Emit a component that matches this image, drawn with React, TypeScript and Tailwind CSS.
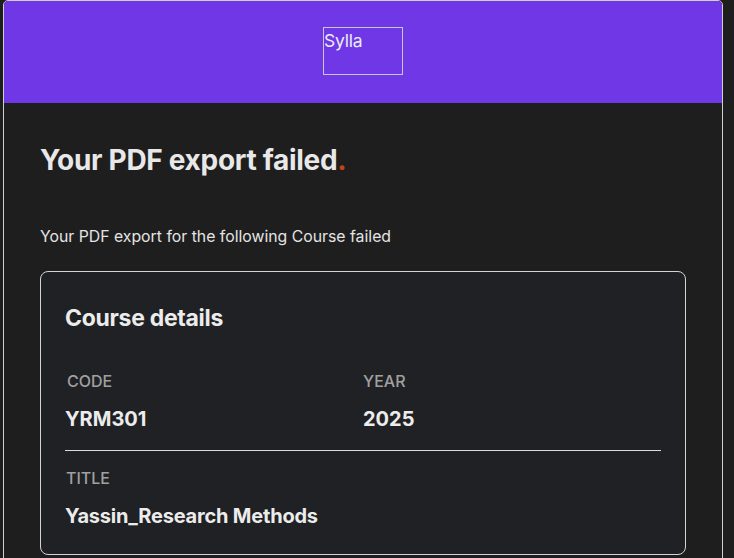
import React from "react";

export default function App() {
  return (
    <div
      className="w-[734px] h-[558px] overflow-hidden bg-[#1e1e1e]"
      style={{ fontFamily: "Inter, 'Noto Sans', sans-serif" }}
    >
      <div className="ml-[3px] mt-[0px] w-[720px] h-[600px] border border-[#d0d0d0] rounded-t-[5px] overflow-hidden bg-[#1e1e1e]">
        <div className="h-[102px] bg-[#6f37e5] flex justify-center pt-[26px]">
          <div className="w-[80px] h-[48px] border border-[#c8c8d0] text-[#ececf4] text-[17.5px] leading-[26px] tracking-[-0.2px]">
            Sylla
          </div>
        </div>
        <div className="pl-[36px] pr-[36px]">
          <h1 className="mt-[40px] text-[28px] leading-[34px] font-bold text-[#e8e8e8] tracking-[-0.3px]">
            Your PDF export failed<span className="text-[#c2421a]">.</span>
          </h1>
          <p className="mt-[49px] text-[15.8px] leading-[22px] text-[#e4e4e4]">
            Your PDF export for the following Course failed
          </p>
          <div className="mt-[23px] w-[646px] rounded-[8px] border border-[#d4d4d4] bg-[#202124] px-[24px] pt-[31px] pb-[25px]">
            <h2 className="text-[23px] leading-[30px] font-bold text-[#ececec] tracking-[-0.3px]">
              Course details
            </h2>
            <div className="mt-[38px] grid grid-cols-2">
              <div>
                <div className="pl-[2px] text-[16px] leading-[20px] font-medium text-[#a0a0a0]">CODE</div>
                <div className="mt-[15px] text-[20px] leading-[26px] font-bold text-[#ececec]">YRM301</div>
              </div>
              <div>
                <div className="text-[16px] leading-[20px] font-medium text-[#a0a0a0]">YEAR</div>
                <div className="mt-[15px] text-[20px] leading-[26px] font-bold text-[#ececec]">2025</div>
              </div>
            </div>
            <div className="mt-[18px] h-px bg-[#dcdcdc]" />
            <div className="mt-[17px] pl-[1px] text-[16px] leading-[20px] font-medium text-[#a0a0a0]">TITLE</div>
            <div className="mt-[15px] text-[20px] leading-[26px] font-bold text-[#ececec] tracking-[-0.2px]">
              Yassin_Research Methods
            </div>
          </div>
        </div>
      </div>
    </div>
  );
}
